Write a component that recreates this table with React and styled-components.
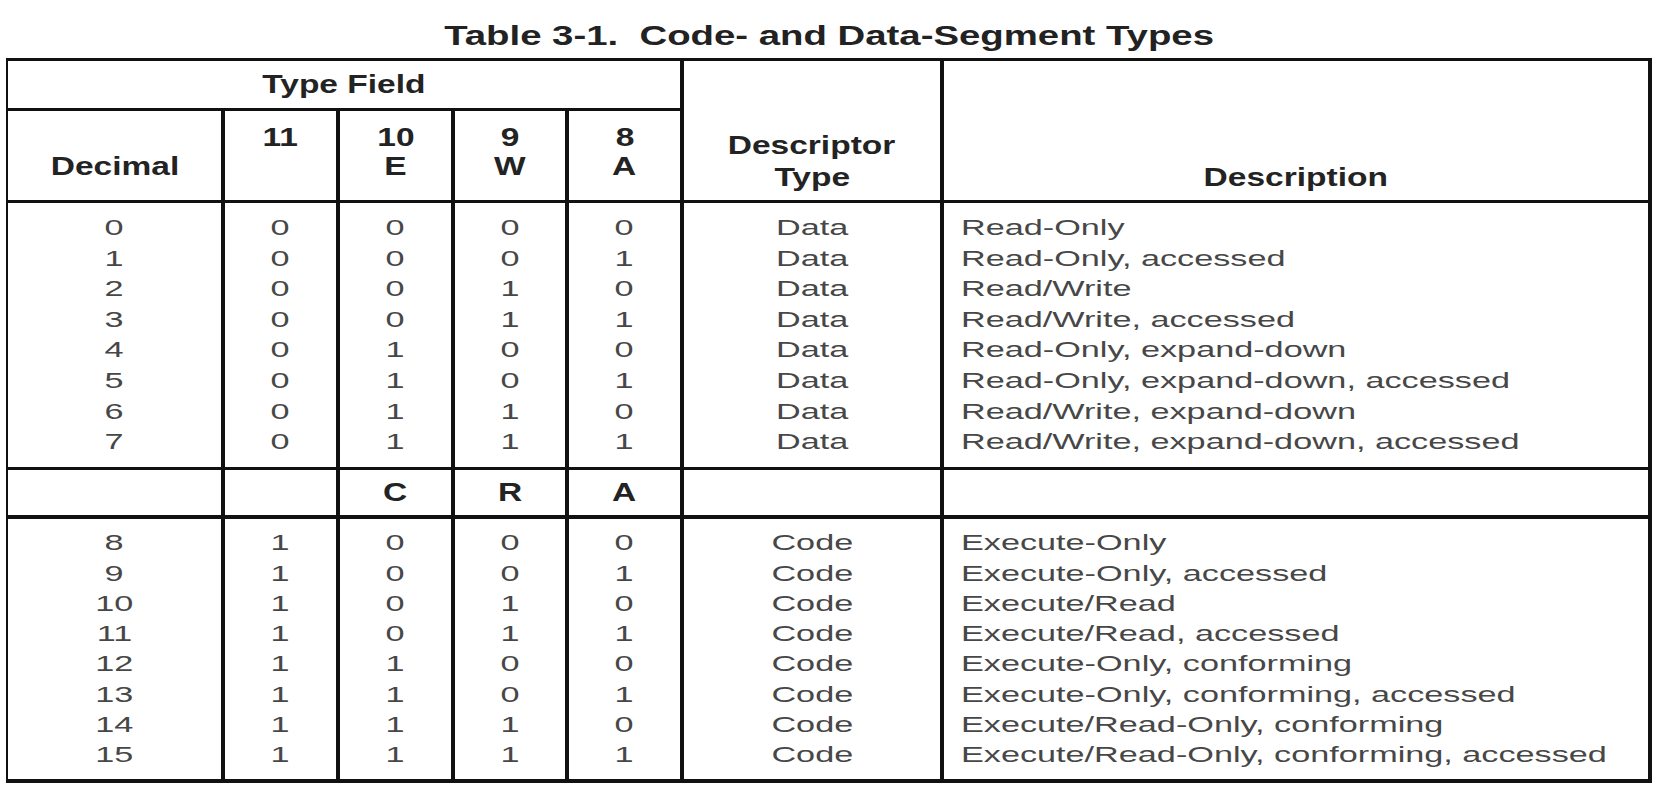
import React from 'react'
import styled, { createGlobalStyle } from 'styled-components'

// the source scan is stretched sideways, so every text run is widened with scaleX
const GlobalStyle = createGlobalStyle`
  body {
    margin: 0;
    background: #fff;
    font-family: "Liberation Sans", Arial, sans-serif;
  }
`

const Page = styled.div`
  padding-left: 6px;
`

const Table = styled.table`
  border-collapse: collapse;
  table-layout: fixed;
  width: 1643px;
  color: #474747;
`

const Caption = styled.caption`
  caption-side: top;
  padding: 23px 0 8px;
  font-size: 27px;
  line-height: 27px;
  font-weight: bold;
  color: #222;
  white-space: nowrap;
`

const Wide = styled.span`
  display: inline-block;
  white-space: nowrap;
  transform: scaleX(${p => p.$k});
  transform-origin: ${p => p.$origin || 'center'};
`

const Row = styled.tr`
  height: ${p => p.$h}px;
`

const Group = styled.tbody`
  border-bottom: ${p => p.$rule}px solid #111;
`

const HeadCell = styled.th`
  border: 3px solid #111;
  border-left-width: 4px;
  border-right-width: 4px;
  &:first-child {
    border-left-width: 2px;
  }
  padding: ${p => p.$pad || '0'};
  font-size: 25px;
  line-height: ${p => p.$lh || 29}px;
  font-weight: bold;
  color: #232323;
  text-align: center;
  vertical-align: ${p => p.$valign || 'middle'};
`

const Cell = styled.td`
  border-left: 4px solid #111;
  border-right: 4px solid #111;
  &:first-child {
    border-left-width: 2px;
  }
  padding: ${p => p.$top}px ${p => (p.$left ? 17 : 0)}px ${p => p.$bottom}px;
  font-size: 22px;
  line-height: ${p => p.$pitch}px;
  text-align: ${p => (p.$left ? 'left' : 'center')};
  vertical-align: top;
`

const HEAD_K = 1.34
const BODY_K = 1.555

const dataDesc = [
  'Read-Only',
  'Read-Only, accessed',
  'Read/Write',
  'Read/Write, accessed',
  'Read-Only, expand-down',
  'Read-Only, expand-down, accessed',
  'Read/Write, expand-down',
  'Read/Write, expand-down, accessed',
]

const codeDesc = [
  'Execute-Only',
  'Execute-Only, accessed',
  'Execute/Read',
  'Execute/Read, accessed',
  'Execute-Only, conforming',
  'Execute-Only, conforming, accessed',
  'Execute/Read-Only, conforming',
  'Execute/Read-Only, conforming, accessed',
]

const bitsOf = n => [3, 2, 1, 0].map(b => (n >> b) & 1)

const H = ({ children }) => <Wide $k={HEAD_K}>{children}</Wide>

const SegmentRows = ({ offset, kind, descs, pitch, pad }) =>
  descs.map((desc, i) => {
    const n = offset + i
    const cell = {
      $pitch: pitch,
      $top: i === 0 ? pad[0] : 0,
      $bottom: i === descs.length - 1 ? pad[1] : 0,
    }
    return (
      <tr key={n}>
        <Cell {...cell}><Wide $k={BODY_K}>{n}</Wide></Cell>
        {bitsOf(n).map((bit, j) => (
          <Cell key={j} {...cell}><Wide $k={BODY_K}>{bit}</Wide></Cell>
        ))}
        <Cell {...cell}><Wide $k={BODY_K}>{kind}</Wide></Cell>
        <Cell {...cell} $left><Wide $k={BODY_K} $origin="left">{desc}</Wide></Cell>
      </tr>
    )
  })

export default function App() {
  return (
    <Page>
      <GlobalStyle />
      <Table>
        <Caption>
          <Wide $k={1.42}>Table 3-1.&nbsp;&nbsp;Code- and Data-Segment Types</Wide>
        </Caption>
        <colgroup>
          <col style={{ width: 216 }} />
          <col style={{ width: 115 }} />
          <col style={{ width: 115 }} />
          <col style={{ width: 114 }} />
          <col style={{ width: 115 }} />
          <col style={{ width: 260 }} />
          <col style={{ width: 708 }} />
        </colgroup>
        <thead>
          <Row $h={50}>
            <HeadCell colSpan={5}><H>Type Field</H></HeadCell>
            <HeadCell rowSpan={2} $valign="bottom" $lh={32} $pad="0 0 7px">
              <H>Descriptor</H>
              <br />
              <H>Type</H>
            </HeadCell>
            <HeadCell rowSpan={2} $valign="bottom" $lh={32} $pad="0 0 7px">
              <H>Description</H>
            </HeadCell>
          </Row>
          <Row $h={92}>
            <HeadCell $valign="bottom" $pad="0 0 19px"><H>Decimal</H></HeadCell>
            <HeadCell $valign="top" $pad="12px 0 0"><H>11</H></HeadCell>
            <HeadCell $valign="top" $pad="12px 0 0"><H>10</H><br /><H>E</H></HeadCell>
            <HeadCell $valign="top" $pad="12px 0 0"><H>9</H><br /><H>W</H></HeadCell>
            <HeadCell $valign="top" $pad="12px 0 0"><H>8</H><br /><H>A</H></HeadCell>
          </Row>
        </thead>
        <Group $rule={3}>
          <SegmentRows offset={0} kind="Data" descs={dataDesc} pitch={30.6} pad={[10, 9]} />
        </Group>
        <Group $rule={4}>
          <Row $h={49}>
            <HeadCell />
            <HeadCell />
            <HeadCell><H>C</H></HeadCell>
            <HeadCell><H>R</H></HeadCell>
            <HeadCell><H>A</H></HeadCell>
            <HeadCell />
            <HeadCell />
          </Row>
        </Group>
        <Group $rule={4}>
          <SegmentRows offset={8} kind="Code" descs={codeDesc} pitch={30.3} pad={[9, 8]} />
        </Group>
      </Table>
    </Page>
  )
}
